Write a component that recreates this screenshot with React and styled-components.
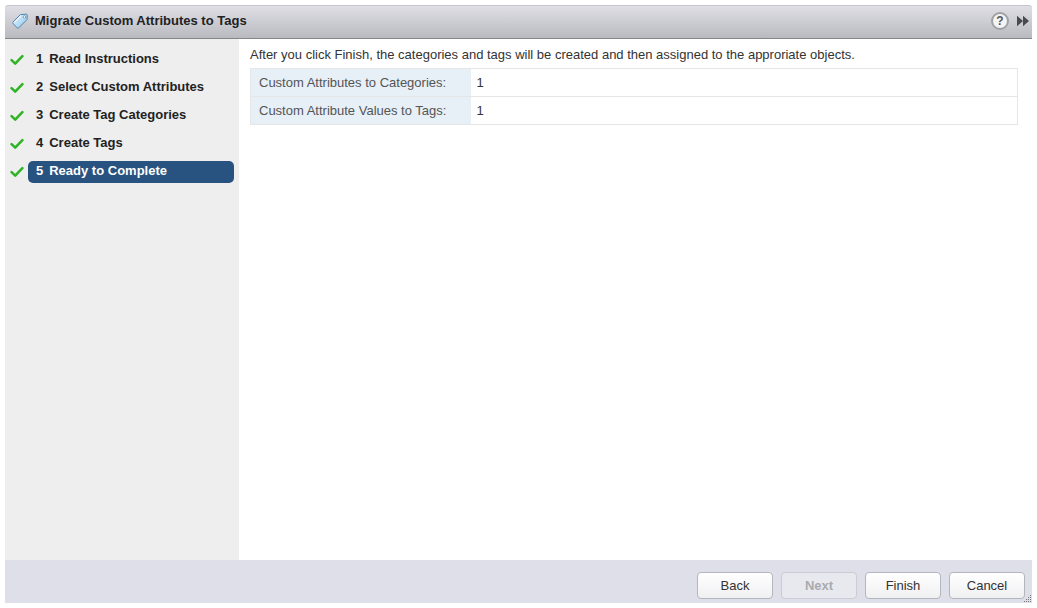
import React from "react";
import styled, { createGlobalStyle } from "styled-components";

const steps = [
  "Read Instructions",
  "Select Custom Attributes",
  "Create Tag Categories",
  "Create Tags",
  "Ready to Complete",
];

const summary = [
  { label: "Custom Attributes to Categories:", value: 1 },
  { label: "Custom Attribute Values to Tags:", value: 1 },
];

function TagIcon() {
  return (
    <svg width="16" height="16" viewBox="0 0 16 16" aria-hidden="true">
      <defs>
        <linearGradient id="tag-fill" x1="0" y1="0" x2="1" y2="1">
          <stop offset="0" stopColor="#eaf7fe" />
          <stop offset="1" stopColor="#8cc3ea" />
        </linearGradient>
      </defs>
      <path
        d="M8.4 1.6 L14.2 1.2 Q15.2 1.2 15.2 2.2 L15 6.6 L6.6 15 Q5.8 15.6 5.1 14.9 L1 10.4 Q0.5 9.6 1.1 8.9 Z"
        fill="url(#tag-fill)"
        stroke="#5583aa"
      />
      <path d="M8.9 2.7 L2.2 9.5" stroke="#fff" fill="none" />
      <circle cx="12.4" cy="4" r="1.3" fill="#fff" stroke="#5583aa" strokeWidth="0.7" />
    </svg>
  );
}

function CheckIcon() {
  return (
    <svg width="14" height="12" viewBox="0 0 14 12" aria-hidden="true">
      <path
        d="M1.6 6.2 L5.2 9.6 L12.4 2.2"
        fill="none"
        stroke="#2db324"
        strokeWidth="2.5"
        strokeLinecap="round"
        strokeLinejoin="round"
      />
    </svg>
  );
}

function ForwardIcon() {
  return (
    <svg width="12" height="12" viewBox="0 0 12 12" aria-hidden="true">
      <path d="M0 0.8 L6 6 L0 11.2 Z M6 0.8 L12 6 L6 11.2 Z" fill="#484a4e" />
    </svg>
  );
}

function ResizeGrip() {
  return (
    <svg width="9" height="9" viewBox="0 0 9 9" aria-hidden="true">
      <path
        d="M7 1h1v1h-1z M5 3h1v1h-1z M7 3h1v1h-1z M3 5h1v1h-1z M5 5h1v1h-1z M7 5h1v1h-1z M1 7h1v1h-1z M3 7h1v1h-1z M5 7h1v1h-1z M7 7h1v1h-1z"
        fill="#77777d"
      />
    </svg>
  );
}

export default function App() {
  return (
    <>
      <GlobalStyle />
      <Wizard>
        <Header>
          <TagIcon />
          <Title>Migrate Custom Attributes to Tags</Title>
          <HelpButton type="button" aria-label="Help">
            ?
          </HelpButton>
          <ForwardButton type="button" aria-label="Expand">
            <ForwardIcon />
          </ForwardButton>
        </Header>

        <Body>
          <Steps>
            {steps.map((name, i) => (
              <Step key={name}>
                <CheckIcon />
                <StepButton type="button" $active={i === steps.length - 1}>
                  <span>{i + 1}</span>
                  <span>{name}</span>
                </StepButton>
              </Step>
            ))}
          </Steps>

          <Content>
            <p>
              After you click Finish, the categories and tags will be created
              and then assigned to the approriate objects.
            </p>
            <Summary>
              <tbody>
                {summary.map(({ label, value }) => (
                  <tr key={label}>
                    <th scope="row">{label}</th>
                    <td>{value}</td>
                  </tr>
                ))}
              </tbody>
            </Summary>
          </Content>
        </Body>

        <Footer>
          <Button type="button">Back</Button>
          <Button type="button" disabled>
            Next
          </Button>
          <Button type="button">Finish</Button>
          <Button type="button">Cancel</Button>
          <Grip>
            <ResizeGrip />
          </Grip>
        </Footer>
      </Wizard>
    </>
  );
}

const GlobalStyle = createGlobalStyle`
  * {
    box-sizing: border-box;
  }

  body {
    margin: 0;
    background: #fff;
    color: #333;
    font-family: "Liberation Sans", Arial, sans-serif;
    font-size: 13px;
    line-height: 16px;
  }

  button {
    font: inherit;
    color: inherit;
  }
`;

const Wizard = styled.main`
  display: flex;
  flex-direction: column;
  height: 100vh;
  padding: 5px;
`;

const Header = styled.header`
  display: flex;
  align-items: center;
  height: 34px;
  padding: 0 3px 2px 7px;
  background: linear-gradient(#dfdfe5, #b9bac0);
  border-top: 1px solid #c4c5ca;
  border-bottom: 1px solid #85868a;
  border-radius: 3px 3px 0 0;
`;

const Title = styled.h1`
  flex: 1;
  margin: 0 0 0 7px;
  color: #222;
  font-size: 13px;
  font-weight: bold;
`;

const HelpButton = styled.button`
  width: 18px;
  height: 18px;
  padding: 0;
  background: #f4f4f5;
  border: 2px solid #a0a1a5;
  border-radius: 50%;
  color: #555;
  font-size: 12px;
  font-weight: bold;
  line-height: 14px;
`;

const ForwardButton = styled.button`
  display: flex;
  margin-left: 8px;
  padding: 0;
  background: none;
  border: 0;
`;

const Body = styled.div`
  display: flex;
  flex: 1;
`;

const Steps = styled.ol`
  flex: none;
  width: 234px;
  margin: 0;
  padding: 10px 5px 0;
  background: #eee;
  list-style: none;
`;

const Step = styled.li`
  display: flex;
  align-items: center;
  gap: 4px;
  margin-bottom: 6px;
`;

const StepButton = styled.button`
  display: flex;
  flex: 1;
  gap: 6px;
  padding: 2px 8px 4px;
  background: ${({ $active }) => ($active ? "#285380" : "transparent")};
  border: 0;
  border-radius: 5px;
  color: ${({ $active }) => ($active ? "#fff" : "#222")};
  font-weight: bold;
  text-align: left;
`;

const Content = styled.section`
  flex: 1;
  padding: 8px 14px 0 11px;

  p {
    margin: 0 0 5px;
  }
`;

const Summary = styled.table`
  width: 100%;
  border-collapse: collapse;

  th,
  td {
    height: 28px;
    padding: 0 8px;
    border: 1px solid #e6e6e6;
    text-align: left;
  }

  th {
    width: 220px;
    background: #e7eff7;
    border-right: 0;
    color: #555;
    font-weight: normal;
  }

  td {
    padding-left: 6px;
    border-left: 0;
  }
`;

const Footer = styled.footer`
  position: relative;
  display: flex;
  align-items: center;
  justify-content: flex-end;
  gap: 8px;
  height: 43px;
  padding: 8px 7px 0;
  background: #dedfe8;
`;

const Button = styled.button`
  width: 76px;
  height: 27px;
  padding: 0;
  background: linear-gradient(#fff, #f0f0f2);
  border: 1px solid #b3b7bd;
  border-radius: 4px;

  &:disabled {
    background: #e8e9ef;
    border-color: #cacdd3;
    color: #a9abb0;
    font-weight: bold;
  }
`;

const Grip = styled.span`
  position: absolute;
  right: 0;
  bottom: 0;
  display: flex;
`;
